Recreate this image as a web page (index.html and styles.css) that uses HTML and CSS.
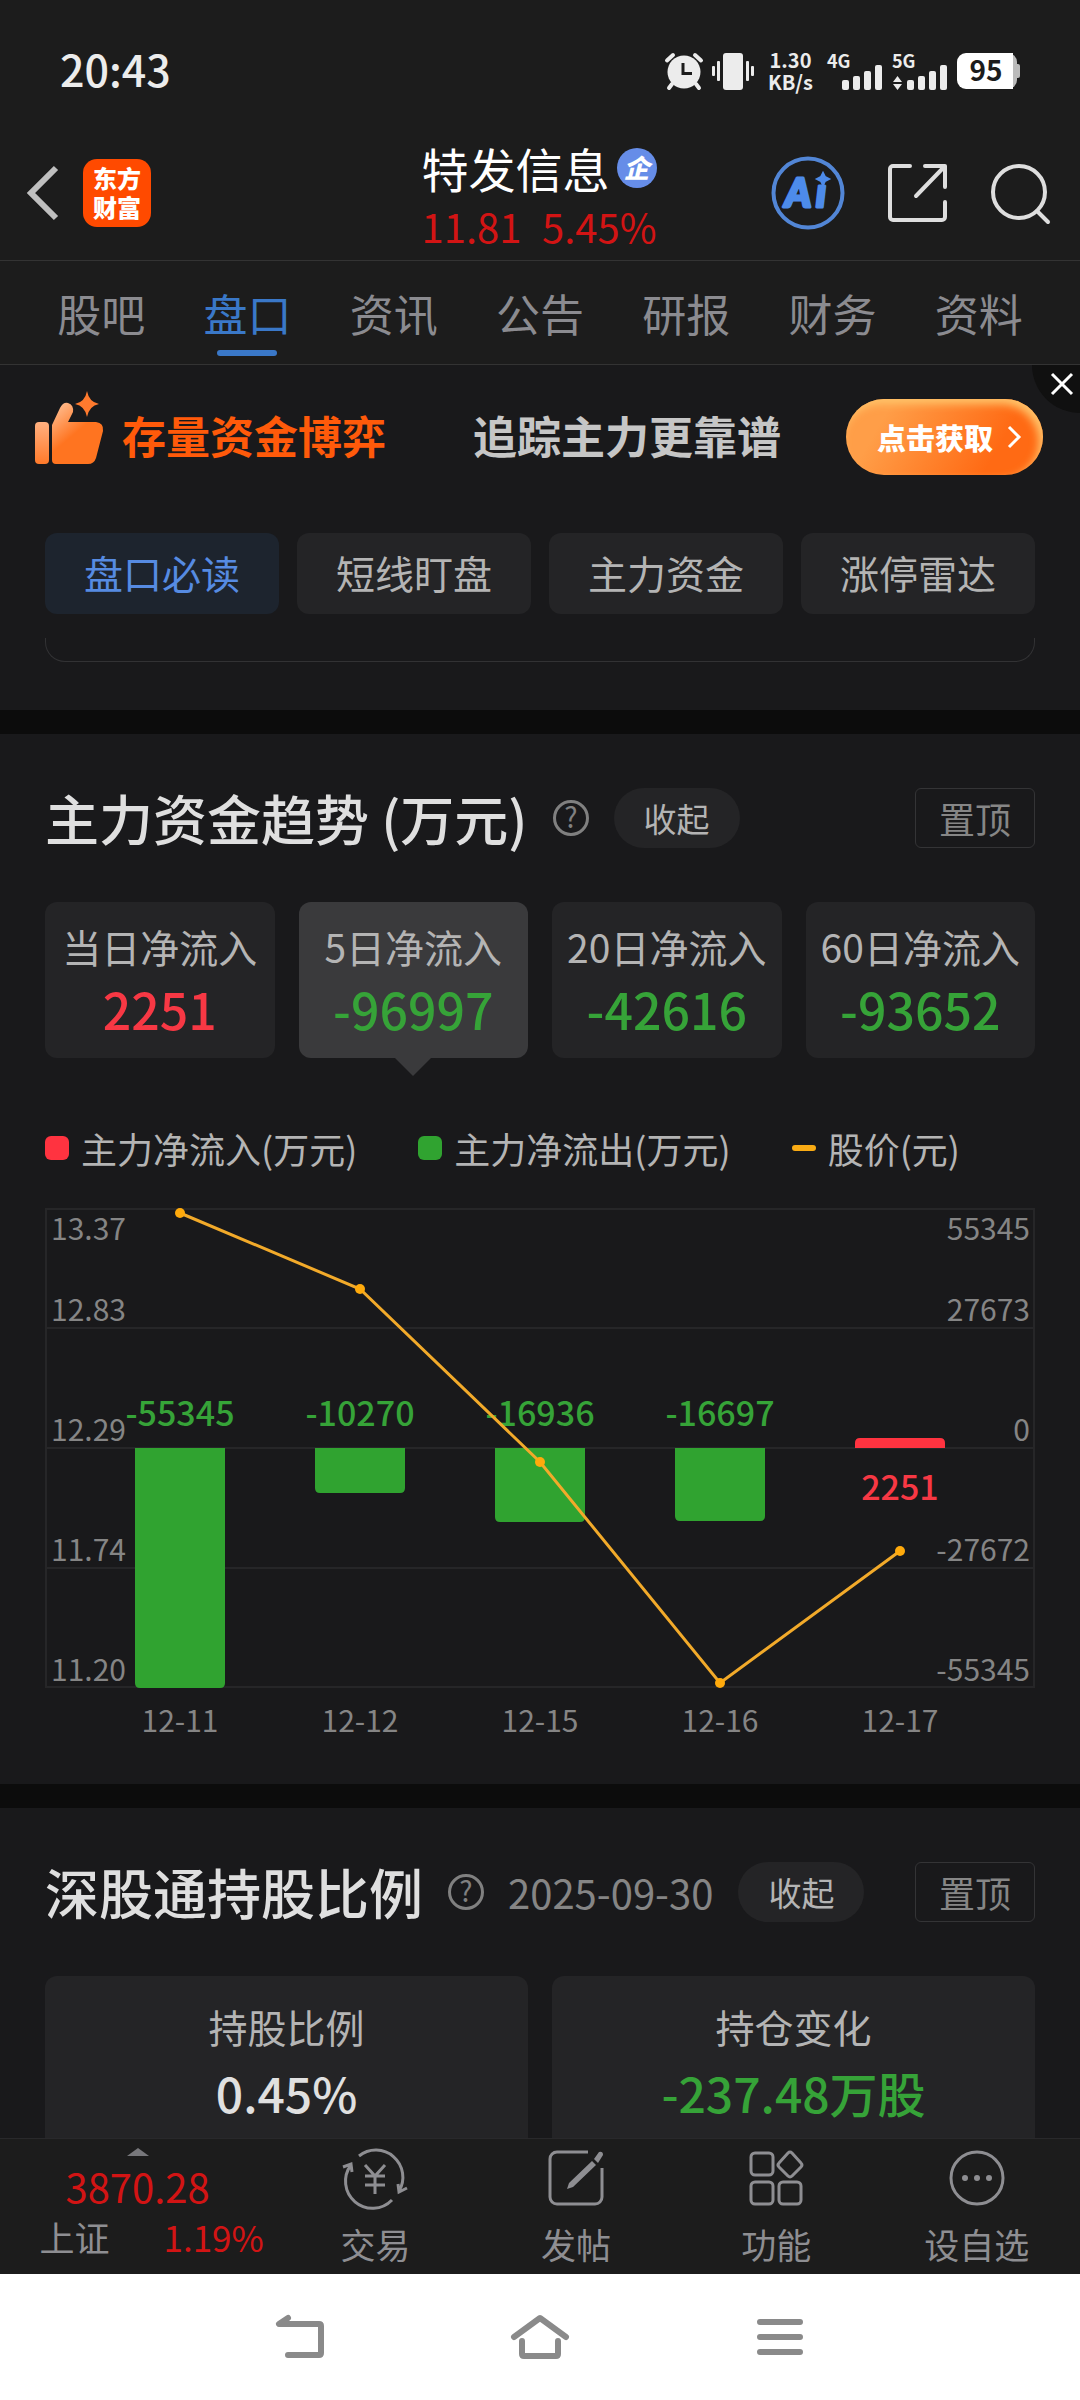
FILE: index.html
```html
<!DOCTYPE html>
<html lang="zh-CN">
  <head>
    <meta charset="UTF-8">
    <meta name="viewport" content="width=device-width, initial-scale=1.0">
    <title>特发信息 - 盘口</title>
    <link rel="stylesheet" href="styles.css">
  </head>
  <body>
    <!-- Status bar -->
    <div class="status">
      <span class="clock">20:43</span>
      <div class="status-icons">
        <svg width="38" height="38" viewBox="0 0 38 38">
          <circle cx="19" cy="20" r="16.500" fill="#ececec"/>
          <path d="M2 8.500L8 3M36 8.500L30 3M7 32l-3 4M31 32l3 4" stroke="#ececec" stroke-width="4" stroke-linecap="round"/>
          <path d="M18 11v10.500h9" fill="none" stroke="#1c1c1c" stroke-width="3"/>
        </svg>
        <svg width="42" height="38" viewBox="0 0 42 38" fill="#ececec">
          <rect x="11" y="1" width="20" height="37" rx="3"/>
          <rect x="5" y="9" width="3" height="20" rx="1"/>
          <rect x="0" y="14" width="3" height="10" rx="1"/>
          <rect x="34" y="9" width="3" height="20" rx="1"/>
          <rect x="39" y="14" width="3" height="10" rx="1"/>
        </svg>
        <div class="speed"><span>1.30</span><span>KB/s</span></div>
        <svg class="signal" width="56" height="38" viewBox="0 0 56 38" fill="#ececec">
          <text x="0" y="16">4G</text>
          <rect x="15" y="28" width="7" height="10" rx="2"/>
          <rect x="26" y="24" width="7" height="14" rx="2"/>
          <rect x="37" y="19" width="7" height="19" rx="2"/>
          <rect x="48" y="13" width="7" height="25" rx="2"/>
        </svg>
        <svg class="signal" width="56" height="38" viewBox="0 0 56 38" fill="#ececec">
          <text x="0" y="16">5G</text>
          <path d="M1 30l4.500-6 4.500 6zM1 32l4.500 6 4.500-6z"/>
          <rect x="15" y="28" width="7" height="10" rx="2"/>
          <rect x="26" y="24" width="7" height="14" rx="2"/>
          <rect x="37" y="19" width="7" height="19" rx="2"/>
          <rect x="48" y="13" width="7" height="25" rx="2"/>
        </svg>
        <svg class="battery" width="64" height="36" viewBox="0 0 64 36">
          <rect x="4" width="56" height="36" rx="9" fill="#bbb"/>
          <rect x="58" y="11" width="5" height="14" rx="2" fill="#bbb"/>
          <path d="M9 0h47v36H9a9 9 0 0 1-9-9V9a9 9 0 0 1 9-9z" fill="#fff"/>
          <text x="29" y="28" text-anchor="middle" fill="#1c1c1c">95</text>
        </svg>
      </div>
    </div>

    <header class="header">
      <div class="header-left">
        <button class="icon-btn" type="button" aria-label="返回">
          <svg width="32" height="58" viewBox="0 0 32 58"><path d="M29 4L4 29l25 25" fill="none" stroke="#bfbfbf" stroke-width="6"/></svg>
        </button>
        <a class="logo" href="#">东方<br>财富</a>
      </div>
      <div class="stock">
        <h1>特发信息<span class="badge">企</span></h1>
        <p class="quote"><span>11.81</span><span>5.45%</span></p>
      </div>
      <div class="header-right">
        <button class="icon-btn" type="button" aria-label="AI">
          <svg class="ai" width="74" height="74" viewBox="0 0 74 74">
            <circle cx="37" cy="37" r="34.500" fill="none" stroke="#5286d6" stroke-width="4"/>
            <g stroke="#4d8bea" stroke-width="3" stroke-linejoin="round">
              <text x="14" y="51">A</text>
              <text x="45" y="51">ı</text>
            </g>
            <path d="M52 17l2 4 4 2-4 2-2 4-2-4-4-2 4-2z" stroke="#4d8bea" stroke-width="2"/>
          </svg>
        </button>
        <button class="icon-btn" type="button" aria-label="分享">
          <svg width="60" height="60" viewBox="0 0 60 60" fill="none" stroke="#dedede" stroke-width="4" stroke-linecap="round" stroke-linejoin="round">
            <path d="M22 3H5a3 3 0 0 0-3 3v48a3 3 0 0 0 3 3h49a3 3 0 0 0 3-3V39M37 3h20v21M57 3L28 33"/>
          </svg>
        </button>
        <button class="icon-btn" type="button" aria-label="搜索">
          <svg width="60" height="60" viewBox="0 0 60 60" fill="none" stroke="#dedede" stroke-width="4" stroke-linecap="round">
            <circle cx="28" cy="29" r="26"/><path d="M46 48l11 11"/>
          </svg>
        </button>
      </div>
    </header>

    <nav class="tabs">
      <a href="#">股吧</a>
      <a class="active" href="#">盘口</a>
      <a href="#">资讯</a>
      <a href="#">公告</a>
      <a href="#">研报</a>
      <a href="#">财务</a>
      <a href="#">资料</a>
    </nav>

    <main>
      <div class="banner">
        <svg width="70" height="74" viewBox="0 0 70 74">
          <defs>
            <linearGradient id="thumb" x1="0" y1="0" x2="0.700" y2="1">
              <stop offset="0.100" stop-color="#ffb888"/>
              <stop offset="0.550" stop-color="#ff7420"/>
            </linearGradient>
            <linearGradient id="cuff" x1="0" y1="0" x2="0" y2="1">
              <stop offset="0" stop-color="#ffb080"/>
              <stop offset="1" stop-color="#ff7a2a"/>
            </linearGradient>
          </defs>
          <rect x="1" y="31" width="14" height="42" rx="4" fill="url(#cuff)"/>
          <path d="M18 34l8-17q3-6 8-5 6 2 5 9l-5 10h28q8 1 7 9l-7 27q-2 6-8 6H22q-4 0-4-4z" fill="url(#thumb)"/>
          <path d="M53 0q2 11 12 13-10 2-12 13-2-11-12-13 10-2 12-13z" fill="#ff7a2e"/>
        </svg>
        <strong class="banner-hot">存量资金博弈</strong>
        <strong class="banner-text">追踪主力更靠谱</strong>
        <button class="banner-btn" type="button">点击获取
          <svg width="14" height="24" viewBox="0 0 14 24"><path d="M2 2l10 10L2 22" fill="none" stroke="#fff" stroke-width="3"/></svg>
        </button>
        <button class="banner-close" type="button" aria-label="关闭">
          <svg width="22" height="22" viewBox="0 0 22 22"><path d="M1 1l20 20M21 1L1 21" stroke="#fff" stroke-width="3"/></svg>
        </button>
      </div>

      <div class="chips">
        <button class="active" type="button">盘口必读</button>
        <button type="button">短线盯盘</button>
        <button type="button">主力资金</button>
        <button type="button">涨停雷达</button>
      </div>
      <div class="panel-end"></div>

      <!-- Main capital trend -->
      <section>
        <div class="section-head">
          <h2>主力资金趋势 (万元)</h2>
          <svg class="help" width="36" height="38" viewBox="1 0 36 38"><circle cx="19" cy="19" r="16.500"/><text x="19" y="29" text-anchor="middle">?</text></svg>
          <button class="fold" type="button">收起</button>
          <button class="pin" type="button">置顶</button>
        </div>
        <div class="cards">
          <button class="card" type="button">当日净流入<b class="up">2251</b></button>
          <button class="card active" type="button">5日净流入<b class="down">-96997</b></button>
          <button class="card" type="button">20日净流入<b class="down">-42616</b></button>
          <button class="card" type="button">60日净流入<b class="down">-93652</b></button>
        </div>
        <div class="legend">
          <span><i class="in"></i>主力净流入(万元)</span>
          <span><i class="out"></i>主力净流出(万元)</span>
          <span><i class="price"></i>股价(元)</span>
        </div>
        <svg class="chart" viewBox="0 0 990 532">
          <g class="grid">
            <rect x="1" y="1" width="988" height="478"/>
            <path d="M0 120h990M0 240h990M0 360h990"/>
          </g>
          <g class="axis">
            <text x="6" y="32">13.37</text>
            <text x="6" y="113">12.83</text>
            <text x="6" y="233">12.29</text>
            <text x="6" y="353">11.74</text>
            <text x="6" y="473">11.20</text>
          </g>
          <g class="axis" text-anchor="end">
            <text x="985" y="32">55345</text>
            <text x="985" y="113">27673</text>
            <text x="985" y="233">0</text>
            <text x="985" y="353">-27672</text>
            <text x="985" y="473">-55345</text>
          </g>
          <g class="axis" text-anchor="middle">
            <text x="135" y="524">12-11</text>
            <text x="315" y="524">12-12</text>
            <text x="495" y="524">12-15</text>
            <text x="675" y="524">12-16</text>
            <text x="855" y="524">12-17</text>
          </g>
          <g fill="#30a330">
            <path d="M90 240h90v235q0 5-5 5H95q-5 0-5-5z"/>
            <path d="M270 240h90v40q0 5-5 5h-80q-5 0-5-5z"/>
            <path d="M450 240h90v69q0 5-5 5h-80q-5 0-5-5z"/>
            <path d="M630 240h90v68q0 5-5 5h-80q-5 0-5-5z"/>
          </g>
          <path d="M810 240v-5q0-5 5-5h80q5 0 5 5v5z" fill="#ff3340"/>
          <g class="bar-label" text-anchor="middle">
            <text x="135" y="218">-55345</text>
            <text x="315" y="218">-10270</text>
            <text x="495" y="218">-16936</text>
            <text x="675" y="218">-16697</text>
            <text class="up" x="855" y="292">2251</text>
          </g>
          <polyline points="135,5 315,81 495,254 675,475 855,343" fill="none" stroke="#f2aa2a" stroke-width="3"/>
          <g fill="#ffaa0c">
            <circle cx="135" cy="5" r="5"/>
            <circle cx="315" cy="81" r="5"/>
            <circle cx="495" cy="254" r="5"/>
            <circle cx="675" cy="475" r="5"/>
            <circle cx="855" cy="343" r="5"/>
          </g>
        </svg>
      </section>

      <!-- Shenzhen Connect holdings -->
      <section>
        <div class="section-head">
          <h2>深股通持股比例</h2>
          <svg class="help" width="36" height="38" viewBox="1 0 36 38"><circle cx="19" cy="19" r="16.500"/><text x="19" y="29" text-anchor="middle">?</text></svg>
          <time>2025-09-30</time>
          <button class="fold" type="button">收起</button>
          <button class="pin" type="button">置顶</button>
        </div>
        <div class="holdings">
          <div>持股比例<b>0.45%</b></div>
          <div>持仓变化<b class="down">-237.48万股</b></div>
        </div>
      </section>
    </main>

    <footer class="toolbar">
      <a class="index" href="#">
        <svg width="22" height="8" viewBox="0 0 22 8"><path d="M11 0l11 8H0z" fill="#77777b"/></svg>
        <span class="index-value">3870.28</span>
        <span class="index-row">上证<em>1.19%</em></span>
      </a>
      <a href="#">
        <svg width="66" height="60" viewBox="0 0 66 60">
          <path d="M17 8A27 27 0 0 1 57 43M9 17A27 27 0 0 0 50 52M1 19l8-3 1 8M65 40l-8 4-1-8"/>
          <path d="M23 17l10 11 10-11M33 28v18M23 28h20M23 37h20"/>
        </svg>
        交易
      </a>
      <a href="#">
        <svg width="60" height="60" viewBox="0 0 60 60">
          <path d="M42 4H11a7 7 0 0 0-7 7v38a7 7 0 0 0 7 7h38a7 7 0 0 0 7-7V20"/>
          <path class="solid" d="M46 13l4 4-23 22-6 2 2-6zM48 11l5-7q4-1 4 3l-5 8z"/>
        </svg>
        发帖
      </a>
      <a href="#">
        <svg width="60" height="60" viewBox="0 0 60 60">
          <rect x="5" y="5" width="22" height="22" rx="4"/>
          <rect x="5" y="34" width="22" height="22" rx="4"/>
          <rect x="33" y="34" width="22" height="22" rx="4"/>
          <path d="M44 4q1 0 2 1l9 10q2 2 0 4l-9 9q-2 2-4 0l-9-9q-2-2 0-4l9-10q1-1 2-1z"/>
        </svg>
        功能
      </a>
      <a href="#">
        <svg width="60" height="60" viewBox="0 0 60 60">
          <circle cx="30" cy="30" r="26"/>
          <g class="solid"><circle cx="18" cy="30" r="3"/><circle cx="30" cy="30" r="3"/><circle cx="42" cy="30" r="3"/></g>
        </svg>
        设自选
      </a>
    </footer>

    <div class="sysnav">
      <button class="icon-btn" type="button" aria-label="后退">
        <svg width="50" height="44" viewBox="0 0 50 44"><path d="M13 3L4 9h40q2 0 2 2v27q0 2-2 2H13"/></svg>
      </button>
      <button class="icon-btn" type="button" aria-label="主页">
        <svg width="60" height="46" viewBox="0 0 60 46"><path d="M4 23L30 4l26 19M12 27v13q0 2 2 2h32q2 0 2-2V27"/></svg>
      </button>
      <button class="icon-btn" type="button" aria-label="菜单">
        <svg width="48" height="38" viewBox="0 0 48 38"><path d="M4 4h40M4 19h40M4 34h40"/></svg>
      </button>
    </div>
  </body>
</html>
```

FILE: styles.css
```css
* {
    box-sizing: border-box;
    margin: 0;
    padding: 0;
}
body {
    display: flex;
    flex-direction: column;
    height: 100vh;
    background: #19191b;
    color: #b4b4b4;
    font-family: "Noto Sans CJK SC", "Noto Sans", sans-serif;
}
a {
    color: inherit;
    text-decoration: none;
}
button {
    border: none;
    background: none;
    color: inherit;
    font: inherit;
    cursor: pointer;
}
svg {
    display: block;
    flex: none;
    overflow: visible;
}
.icon-btn {
    display: block;
}
.up {
    color: #f73844;
    fill: #f73844;
}
.down {
    color: #36a338;
}

/* status bar */
.status {
    display: flex;
    flex: none;
    align-items: center;
    justify-content: space-between;
    height: 126px;
    padding: 16px 59px 0 60px;
    background: #1c1c1c;
    color: #ececec;
}
.clock {
    padding-bottom: 6px;
    font-size: 43px;
    font-weight: 500;
}
.status-icons {
    display: flex;
    align-items: center;
    gap: 9px;
}
.speed {
    display: flex;
    flex-direction: column;
    align-items: center;
    margin: 0 5px;
    font-size: 20px;
    font-weight: 700;
    line-height: 22px;
}
.signal text {
    font-size: 18px;
    font-weight: 700;
}
.battery text {
    font-size: 28px;
    font-weight: 700;
}

/* header */
.header {
    display: grid;
    flex: none;
    grid-template-columns: 1fr auto 1fr;
    align-items: center;
    height: 135px;
    padding: 0 29px 0 27px;
    border-bottom: 1px solid #333;
    background: #1c1c1c;
}
.header-left {
    display: flex;
    align-items: center;
    gap: 24px;
}
.logo {
    width: 68px;
    height: 68px;
    padding-top: 4px;
    border-radius: 14px;
    background: #ff4a00;
    color: #fff;
    font-size: 24px;
    font-weight: 900;
    line-height: 29px;
    text-align: center;
}
.stock {
    padding-top: 6px;
}
.stock h1 {
    display: flex;
    align-items: center;
    gap: 7px;
    color: #fff;
    font-size: 47px;
    font-weight: 400;
    line-height: 60px;
}
.badge {
    width: 40px;
    height: 40px;
    border-radius: 50%;
    background: #668de8;
    font-size: 26px;
    font-style: italic;
    font-weight: 900;
    line-height: 38px;
    text-align: center;
}
.quote {
    display: flex;
    justify-content: space-between;
    color: #d21414;
    font-size: 40px;
    line-height: 56px;
}
.header-right {
    display: flex;
    align-items: center;
    justify-content: flex-end;
    gap: 43px;
}
.ai {
    fill: #4d8bea;
    font-family: Lato, sans-serif;
    font-size: 40px;
    font-style: italic;
    font-weight: 900;
}

/* tabs */
.tabs {
    display: flex;
    flex: none;
    height: 104px;
    padding: 0 28px;
    border-bottom: 1px solid #333;
    background: #1c1c1c;
    color: #8b8b90;
    font-size: 44px;
    line-height: 104px;
}
.tabs a {
    position: relative;
    flex: 1;
    text-align: center;
}
.tabs .active {
    color: #3a78c8;
}
.tabs .active::after {
    content: "";
    position: absolute;
    bottom: 8px;
    left: calc(50% - 30px);
    width: 60px;
    height: 6px;
    border-radius: 3px;
    background: #3a78c8;
}

main {
    flex: 1;
    overflow-y: auto;
    scrollbar-width: none;
}

/* banner */
.banner {
    display: flex;
    position: relative;
    align-items: center;
    height: 144px;
    padding: 0 37px 0 34px;
    font-size: 44px;
    line-height: 60px;
    overflow: hidden;
}
.banner > svg {
    margin-bottom: 18px;
}
.banner strong {
    padding-bottom: 4px;
}
.banner-hot {
    margin-left: 18px;
    color: #ff5a0a;
}
.banner-text {
    margin-left: auto;
    color: #c6c6c6;
}
.banner-btn {
    display: flex;
    align-items: center;
    justify-content: center;
    gap: 14px;
    width: 197px;
    height: 76px;
    margin-left: 65px;
    padding-left: 9px;
    border-radius: 38px;
    background: linear-gradient(120deg, #ff9e48 20%, #ff6a14 75%);
    box-shadow: inset -4px 5px 8px #ffc46a;
    color: #fff;
    font-size: 29px;
    font-weight: 900;
}
.banner-close {
    display: flex;
    position: absolute;
    top: -48px;
    right: -48px;
    align-items: flex-start;
    width: 96px;
    height: 96px;
    padding: 56px 0 0 19px;
    border-radius: 50%;
    background: #101010;
}

/* chips */
.chips {
    display: grid;
    grid-template-columns: repeat(4, 1fr);
    gap: 18px;
    padding: 24px 45px;
}
.chips button {
    height: 81px;
    padding-bottom: 4px;
    border-radius: 12px;
    background: #242426;
    font-size: 39px;
    line-height: 60px;
}
.chips .active {
    background: #1d242e;
    color: #568be2;
}
.panel-end {
    height: 24px;
    margin: 0 45px 48px;
    border: 1px solid #323234;
    border-top: none;
    border-radius: 0 0 20px 20px;
}

/* sections */
section {
    padding: 54px 45px 0;
    border-top: 24px solid #0c0c0c;
}
.section-head {
    display: flex;
    align-items: center;
    height: 60px;
    margin-bottom: 54px;
}
h2 {
    margin-right: 25px;
    color: #dfdfdf;
    font-size: 54px;
    font-weight: 500;
    line-height: 60px;
}
.help circle {
    fill: none;
    stroke: #808080;
    stroke-width: 3px;
}
.help text {
    fill: #808080;
    font-size: 28px;
}
.section-head time {
    margin-left: 24px;
    color: #858585;
    font-size: 40px;
}
.fold {
    width: 126px;
    height: 60px;
    margin-left: 25px;
    border-radius: 30px;
    background: #242426;
    font-size: 33px;
    line-height: 60px;
}
.pin {
    width: 120px;
    height: 60px;
    margin-left: auto;
    border: 1px solid #343436;
    border-radius: 6px;
    color: #868686;
    font-size: 36px;
    line-height: 56px;
}
.cards {
    display: grid;
    grid-template-columns: repeat(4, 1fr);
    gap: 24px;
}
.card {
    position: relative;
    height: 156px;
    padding-bottom: 6px;
    border-radius: 12px;
    background: #242426;
    font-size: 39px;
    line-height: 62px;
    white-space: nowrap;
}
.card b {
    display: block;
    font-size: 50px;
    font-weight: 500;
}
.card.active {
    background: #3a3a3c;
}
.card.active::after {
    content: "";
    position: absolute;
    top: 100%;
    left: calc(50% - 18px);
    border: 18px solid transparent;
    border-top-color: #3a3a3c;
    border-bottom: none;
}
.legend {
    display: flex;
    gap: 61px;
    margin-top: 60px;
    font-size: 36px;
    line-height: 60px;
}
.legend span {
    display: flex;
    align-items: center;
    gap: 12px;
}
.legend i {
    width: 24px;
    height: 24px;
    border-radius: 6px;
}
.legend .in {
    background: #ff3340;
}
.legend .out {
    background: #30a330;
}
.legend .price {
    height: 6px;
    background: #f9ab14;
}

/* chart */
.chart {
    width: 100%;
    margin: 30px 0 44px;
}
.grid {
    fill: none;
    stroke: #262628;
    stroke-width: 2px;
}
.axis {
    fill: #858585;
    font-size: 30px;
}
.bar-label {
    fill: #36a338;
    font-size: 34px;
    font-weight: 500;
}

.holdings {
    display: grid;
    grid-template-columns: 1fr 1fr;
    gap: 24px;
}
.holdings div {
    height: 198px;
    padding-top: 17px;
    border-radius: 12px;
    background: #242426;
    font-size: 39px;
    line-height: 66px;
    text-align: center;
}
.holdings b {
    display: block;
    color: #e0e0e0;
    font-size: 48px;
    font-weight: 500;
}
.holdings .down {
    color: #36a338;
}

/* bottom toolbar */
.toolbar {
    display: flex;
    flex: none;
    height: 136px;
    padding-right: 3px;
    border-top: 1px solid #29292b;
    background: #1c1c1c;
    color: #8e8e92;
    font-size: 35px;
}
.toolbar a {
    display: flex;
    flex: 201;
    flex-direction: column;
    align-items: center;
    padding-top: 9px;
    line-height: 72px;
}
.toolbar a > svg {
    fill: none;
    stroke: #8e8e92;
    stroke-width: 3px;
}
.toolbar .solid {
    fill: #8e8e92;
    stroke: none;
}
.toolbar .index {
    flex: 276;
}
.toolbar .index > svg {
    stroke: none;
}
.index-value {
    color: #d21414;
    font-size: 40px;
    line-height: 60px;
}
.index-row {
    display: flex;
    gap: 54px;
    padding-left: 28px;
    line-height: 42px;
}
.index-row em {
    color: #d21414;
    font-style: normal;
}

/* system navigation */
.sysnav {
    display: grid;
    flex: none;
    grid-template-columns: repeat(3, 1fr);
    align-items: center;
    justify-items: center;
    height: 126px;
    padding: 0 calc(100% / 6);
    background: #fff;
}
.sysnav svg {
    fill: none;
    stroke: #8a8a8a;
    stroke-width: 6px;
    stroke-linecap: round;
    stroke-linejoin: round;
}
```
